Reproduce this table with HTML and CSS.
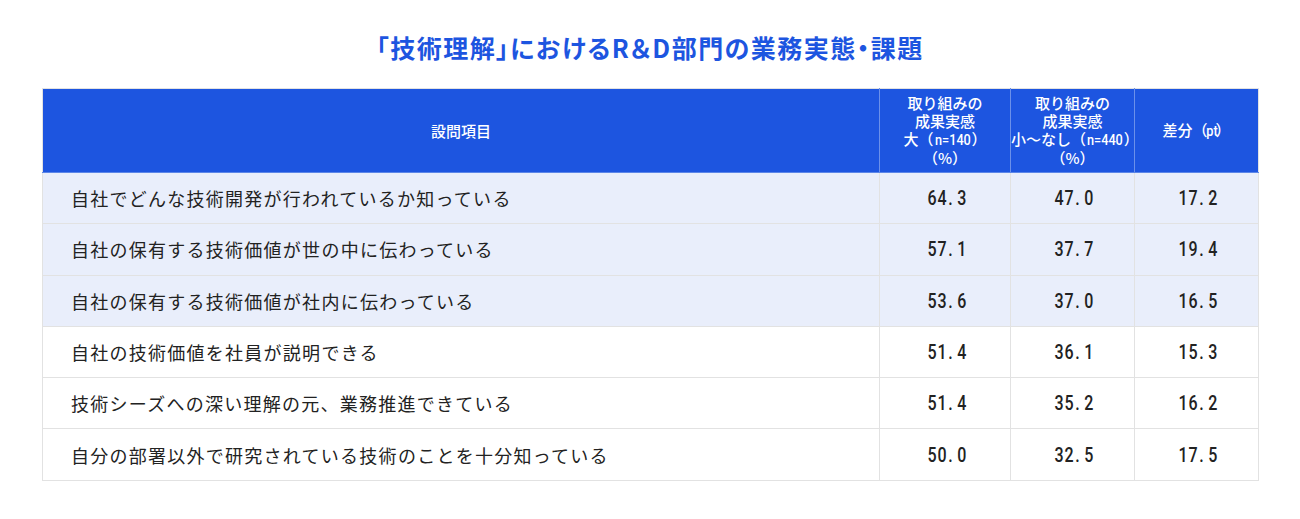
FILE: index.html
```html
<!DOCTYPE html>
<html lang="ja">
<head>
<meta charset="utf-8">
<link rel="stylesheet" href="styles.css">
</head>
<body>
<div class="page">
  <h1 class="title">「技術理解」におけるR＆D部門の業務実態・課題</h1>
  <table class="tbl">
    <colgroup>
      <col class="c-item"><col class="c-num"><col class="c-num2"><col class="c-num2">
    </colgroup>
    <thead>
      <tr>
        <th>設問項目</th>
        <th>取り組みの<br>成果実感<br>大（<span class="nn">n=140</span>）<br>（%）</th>
        <th>取り組みの<br>成果実感<br>小～なし（<span class="nn">n=440</span>）<br>（%）</th>
        <th>差分（<span class="nn">pt</span>）</th>
      </tr>
    </thead>
    <tbody>
      <tr class="hl"><td class="item">自社でどんな技術開発が行われているか知っている</td><td class="num"><span class="v">64<span class="dot">.</span>3</span></td><td class="num"><span class="v">47<span class="dot">.</span>0</span></td><td class="num"><span class="v">17<span class="dot">.</span>2</span></td></tr>
      <tr class="hl"><td class="item">自社の保有する技術価値が世の中に伝わっている</td><td class="num"><span class="v">57<span class="dot">.</span>1</span></td><td class="num"><span class="v">37<span class="dot">.</span>7</span></td><td class="num"><span class="v">19<span class="dot">.</span>4</span></td></tr>
      <tr class="hl"><td class="item">自社の保有する技術価値が社内に伝わっている</td><td class="num"><span class="v">53<span class="dot">.</span>6</span></td><td class="num"><span class="v">37<span class="dot">.</span>0</span></td><td class="num"><span class="v">16<span class="dot">.</span>5</span></td></tr>
      <tr><td class="item">自社の技術価値を社員が説明できる</td><td class="num"><span class="v">51<span class="dot">.</span>4</span></td><td class="num"><span class="v">36<span class="dot">.</span>1</span></td><td class="num"><span class="v">15<span class="dot">.</span>3</span></td></tr>
      <tr><td class="item">技術シーズへの深い理解の元、業務推進できている</td><td class="num"><span class="v">51<span class="dot">.</span>4</span></td><td class="num"><span class="v">35<span class="dot">.</span>2</span></td><td class="num"><span class="v">16<span class="dot">.</span>2</span></td></tr>
      <tr><td class="item">自分の部署以外で研究されている技術のことを十分知っている</td><td class="num"><span class="v">50<span class="dot">.</span>0</span></td><td class="num"><span class="v">32<span class="dot">.</span>5</span></td><td class="num"><span class="v">17<span class="dot">.</span>5</span></td></tr>
    </tbody>
  </table>
</div>
</body>
</html>
```
FILE: styles.css
```css
html, body {
  margin: 0;
  padding: 0;
  background: #ffffff;
}
body {
  font-family: "Noto Sans CJK JP", "Noto Sans", sans-serif;
  color: #222222;
}
.page {
  padding: 28px 42px 0 42px;
}
.title {
  margin: 0 0 22px 0;
  text-align: center;
  font-size: 25px;
  line-height: 38px;
  font-weight: 700;
  color: #1d55e0;
  font-feature-settings: "palt";
  letter-spacing: 0.06em;
}
.tbl {
  width: 1216px;
  border-collapse: collapse;
  table-layout: fixed;
  border: 1px solid #e2e2e2;
}
.c-item { width: 837px; }
.c-num { width: 131px; }
.c-num2 { width: 124px; }
.tbl th {
  background: #1d55e0;
  color: #ffffff;
  font-weight: 500;
  font-size: 15px;
  line-height: 18px;
  height: 83px;
  padding: 0;
  text-align: center;
  vertical-align: middle;
  white-space: nowrap;
  border-left: 1px solid #6b90ea;
  border-bottom: 1px solid #5c86e8;
}
.tbl th:first-child { border-left: none; }
.nn {
  display: inline-block;
  font-family: Roboto, sans-serif;
  font-size: 15.5px;
  transform: scaleX(0.82);
  margin: 0 -3px;
}
.tbl td {
  height: 50.3px;
  padding: 0;
  border-top: 1px solid #e2e2e2;
  border-left: 1px solid #e2e2e2;
  vertical-align: middle;
}
.tbl tr.hl td { background: #e9eefb; }
.item {
  padding-left: 28px !important;
  font-size: 18px;
  letter-spacing: 0.07em;
  color: #222222;
}
.num {
  text-align: center;
  font-family: Roboto, sans-serif;
  font-weight: 500;
  font-size: 20.5px;
  color: #222222;
}
.v {
  display: inline-block;
  transform: scaleX(0.78);
  letter-spacing: 0.05em;
  margin-left: 4px;
}
.dot {
  margin: 0 5px 0 1px;
}
```
